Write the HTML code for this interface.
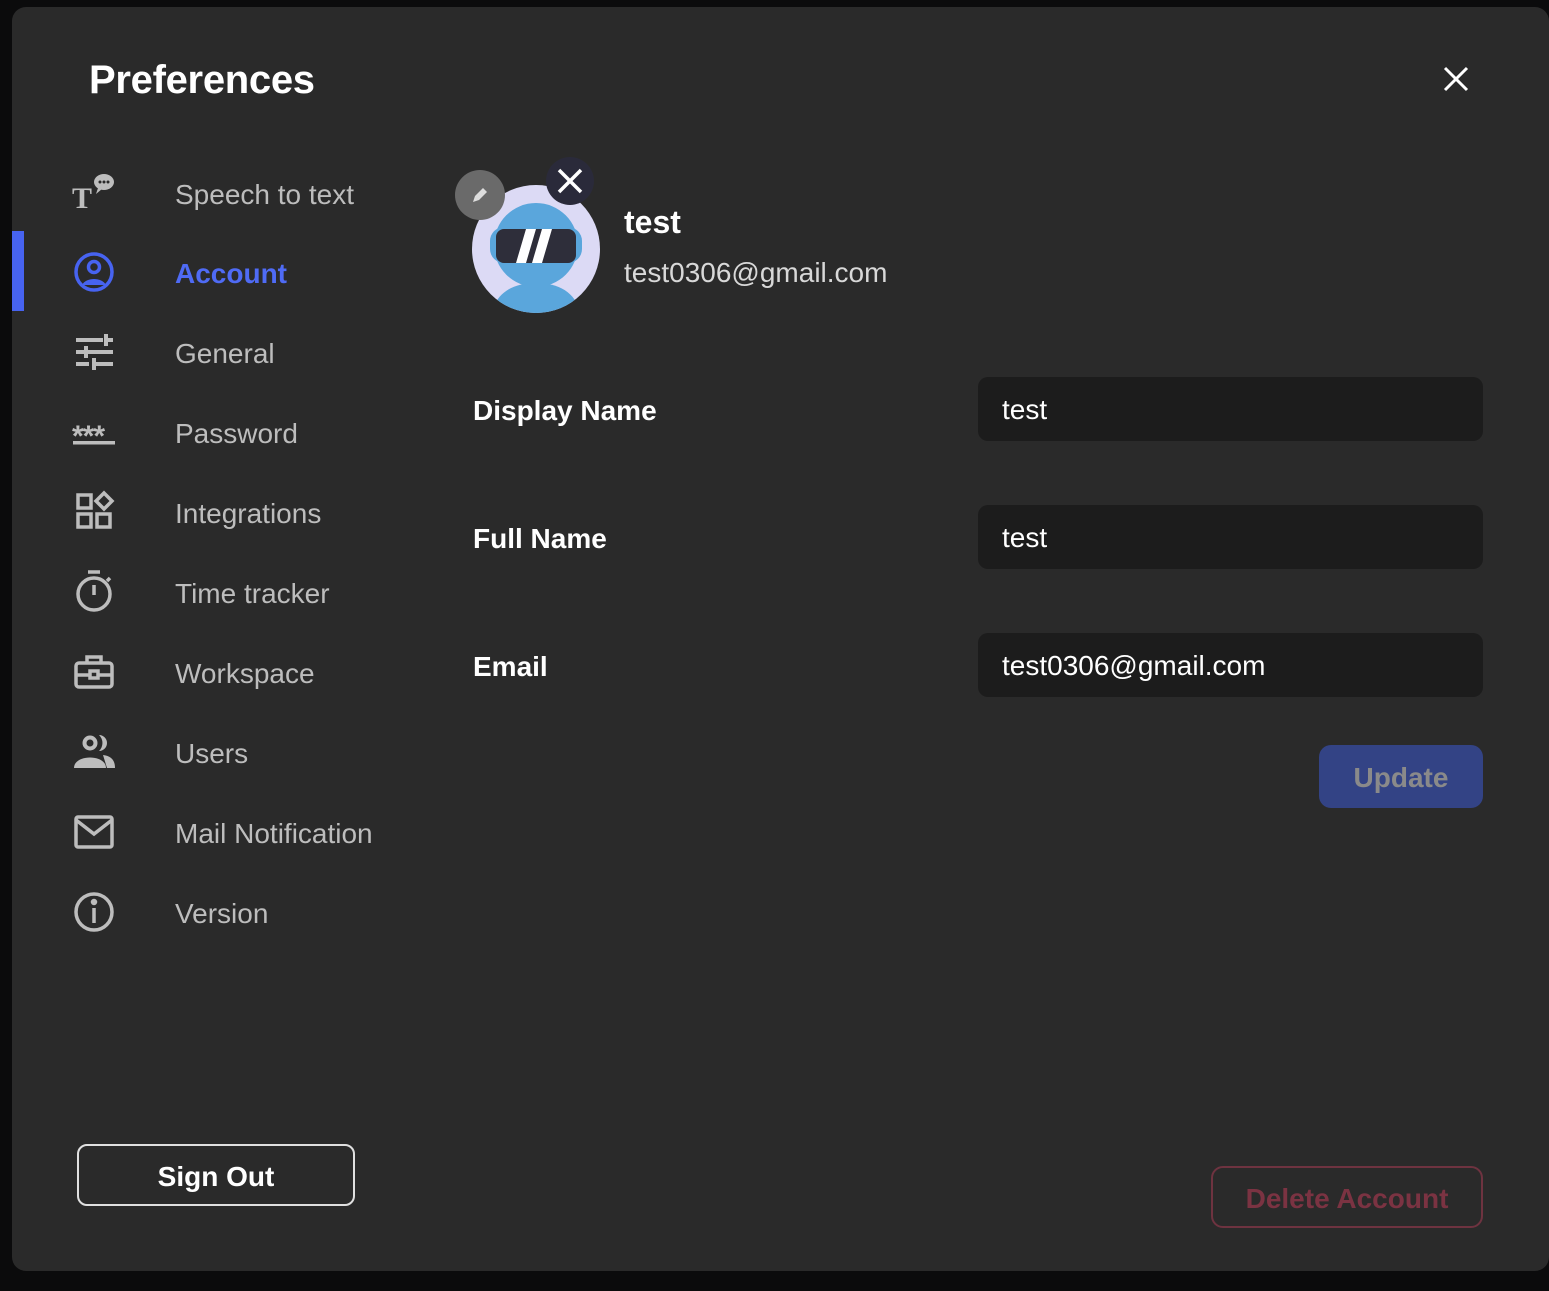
<!DOCTYPE html>
<html><head><meta charset="utf-8"><style>
*{margin:0;padding:0;box-sizing:border-box}
html,body{width:1549px;height:1291px;background:#0b0b0c;overflow:hidden;font-family:"Liberation Sans",sans-serif}
.modal{position:absolute;left:12px;top:7px;width:1537px;height:1264px;background:#2a2a2a;border-radius:14px}
.a{position:absolute}
.title{left:89px;top:58px;font-size:40px;font-weight:bold;color:#fff;letter-spacing:-0.3px}
.item{position:absolute;left:175px;font-size:28px;color:#bdbdbd;line-height:36px}
.ic{position:absolute;left:72px;width:44px;height:44px}
.lbl{position:absolute;left:473px;font-size:28px;font-weight:bold;color:#fff}
.inp{position:absolute;left:978px;width:505px;height:64px;background:#1c1c1c;border-radius:10px;font-size:28px;color:#fff;padding-left:24px;line-height:66px}
</style></head><body>
<div class="modal"></div>
<div class="a title">Preferences</div>
<svg class="a" style="left:1442px;top:65px" width="28" height="28" viewBox="0 0 28 28"><path d="M3 3L25 25M25 3L3 25" stroke="#fff" stroke-width="3"/></svg>

<div class="a" style="left:12px;top:231px;width:12px;height:80px;background:#4763f0"></div>

<svg class="ic" style="top:171px" viewBox="0 0 44 44"><text x="0" y="37" font-family="Liberation Serif" font-weight="bold" font-size="30" fill="#bdbdbd">T</text><ellipse cx="32" cy="11" rx="10" ry="8" fill="#bdbdbd"/><path d="M26 17L24 23L30 18Z" fill="#bdbdbd"/><circle cx="28" cy="11" r="1.5" fill="#2a2a2a"/><circle cx="32" cy="11" r="1.5" fill="#2a2a2a"/><circle cx="36" cy="11" r="1.5" fill="#2a2a2a"/></svg>
<div class="item" style="top:177px">Speech to text</div>

<svg class="ic" style="top:250px" viewBox="0 0 44 44"><circle cx="22" cy="22" r="18" fill="none" stroke="#4763f0" stroke-width="3.5"/><circle cx="22" cy="17" r="5.5" fill="none" stroke="#4763f0" stroke-width="3.5"/><path d="M10 35C14 27 30 27 34 35" fill="#4763f0"/></svg>
<div class="item" style="top:256px;color:#4f6bf5;font-weight:bold">Account</div>

<svg class="ic" style="top:330px" viewBox="0 0 44 44" fill="#bdbdbd"><rect x="4" y="8" width="27" height="4"/><rect x="32" y="4" width="4" height="12"/><rect x="32" y="8" width="9" height="4"/><rect x="4" y="20" width="8" height="4"/><rect x="12" y="16" width="4" height="12"/><rect x="16" y="20" width="25" height="4"/><rect x="4" y="32" width="13" height="4"/><rect x="20" y="28" width="4" height="12"/><rect x="24" y="32" width="17" height="4"/></svg>
<div class="item" style="top:336px">General</div>

<svg class="ic" style="top:410px" viewBox="0 0 44 44"><text x="0" y="36" font-size="30" font-weight="bold" fill="#bdbdbd" letter-spacing="-1">***</text><rect x="1" y="31" width="42" height="3.5" fill="#bdbdbd"/></svg>
<div class="item" style="top:416px">Password</div>

<svg class="ic" style="top:490px" viewBox="0 0 44 44" fill="none" stroke="#bdbdbd" stroke-width="3.5"><rect x="6" y="5" width="13" height="13"/><rect x="6" y="24" width="13" height="13"/><rect x="25" y="24" width="13" height="13"/><path d="M32 3L40 11L32 19L24 11Z"/></svg>
<div class="item" style="top:496px">Integrations</div>

<svg class="ic" style="top:570px" viewBox="0 0 44 44" fill="none" stroke="#bdbdbd" stroke-width="3.5"><circle cx="22" cy="24" r="16"/><path d="M16 2H28M22 15V25M35 11L38 8"/></svg>
<div class="item" style="top:576px">Time tracker</div>

<svg class="ic" style="top:650px" viewBox="0 0 44 44" fill="none" stroke="#bdbdbd" stroke-width="3.5"><path d="M15 13V7H29V13"/><rect x="4" y="13" width="36" height="24" rx="3"/><path d="M4 25H40"/><rect x="18" y="21" width="8" height="7" fill="#2a2a2a"/></svg>
<div class="item" style="top:656px">Workspace</div>

<svg class="ic" style="top:730px" viewBox="0 0 44 44" fill="#bdbdbd"><circle cx="18" cy="13" r="5.5" fill="none" stroke="#bdbdbd" stroke-width="4"/><path d="M27 5A8 8 0 0 1 27 21A11 11 0 0 0 27 5Z"/><path d="M2 38C2 24 34 24 34 38Z"/><path d="M31 25C39 26 43 30 43 38H35Z"/></svg>
<div class="item" style="top:736px">Users</div>

<svg class="ic" style="top:810px" viewBox="0 0 44 44" fill="none" stroke="#bdbdbd" stroke-width="3.5"><rect x="4" y="7" width="36" height="30" rx="2"/><path d="M4 10L22 24L40 10"/></svg>
<div class="item" style="top:816px">Mail Notification</div>

<svg class="ic" style="top:890px" viewBox="0 0 44 44" fill="none" stroke="#bdbdbd" stroke-width="3.5"><circle cx="22" cy="22" r="18"/><path d="M22 18V33"/><circle cx="22" cy="12" r="1.5" fill="#bdbdbd"/></svg>
<div class="item" style="top:896px">Version</div>

<div class="a" style="left:77px;top:1144px;width:278px;height:62px;border:2px solid #e0e0e0;border-radius:10px;color:#fff;font-size:28px;font-weight:bold;text-align:center;line-height:62px">Sign Out</div>

<svg class="a" style="left:470px;top:183px" width="132" height="132" viewBox="0 0 132 132">
<defs><clipPath id="c"><circle cx="66" cy="66" r="64"/></clipPath></defs>
<circle cx="66" cy="66" r="64" fill="#dcdaf5"/>
<g clip-path="url(#c)">
<path d="M20 140C22 112 40 100 66 100C92 100 110 112 112 140Z" fill="#5aa6dc"/>
<circle cx="66" cy="62" r="42" fill="#5aa6dc"/>
<rect x="20" y="44" width="92" height="36" rx="14" fill="#5aa6dc"/>
<rect x="26" y="46" width="80" height="34" rx="8" fill="#2e2e3a"/>
<path d="M56 46H66L56 80H46Z M72 46H82L72 80H62Z" fill="#fff"/>
</g></svg>
<div class="a" style="left:455px;top:170px;width:50px;height:50px;border-radius:50%;background:#6a6a6a"></div>
<svg class="a" style="left:469px;top:184px" width="22" height="22" viewBox="0 0 22 22"><path d="M4 18L6 12L14 4L18 8L10 16Z" fill="#ddd"/></svg>
<div class="a" style="left:546px;top:157px;width:48px;height:48px;border-radius:50%;background:#2a2a3a"></div>
<svg class="a" style="left:556px;top:167px" width="28" height="28" viewBox="0 0 28 28"><path d="M3 3L25 25M25 3L3 25" stroke="#fff" stroke-width="3.5"/></svg>

<div class="a" style="left:624px;top:204px;font-size:32px;font-weight:bold;color:#fff">test</div>
<div class="a" style="left:624px;top:257px;font-size:28px;color:#d8d8d8">test0306@gmail.com</div>

<div class="lbl" style="top:395px">Display Name</div>
<div class="inp" style="top:377px">test</div>
<div class="lbl" style="top:523px">Full Name</div>
<div class="inp" style="top:505px">test</div>
<div class="lbl" style="top:651px">Email</div>
<div class="inp" style="top:633px">test0306@gmail.com</div>

<div class="a" style="left:1319px;top:745px;width:164px;height:63px;background:#334385;border-radius:12px;color:#8a8a8a;font-size:28px;font-weight:bold;text-align:center;line-height:66px">Update</div>
<div class="a" style="left:1211px;top:1166px;width:272px;height:62px;border:2px solid #6e3340;border-radius:12px;color:#7b3342;font-size:28px;font-weight:bold;text-align:center;line-height:62px">Delete Account</div>
</body></html>
